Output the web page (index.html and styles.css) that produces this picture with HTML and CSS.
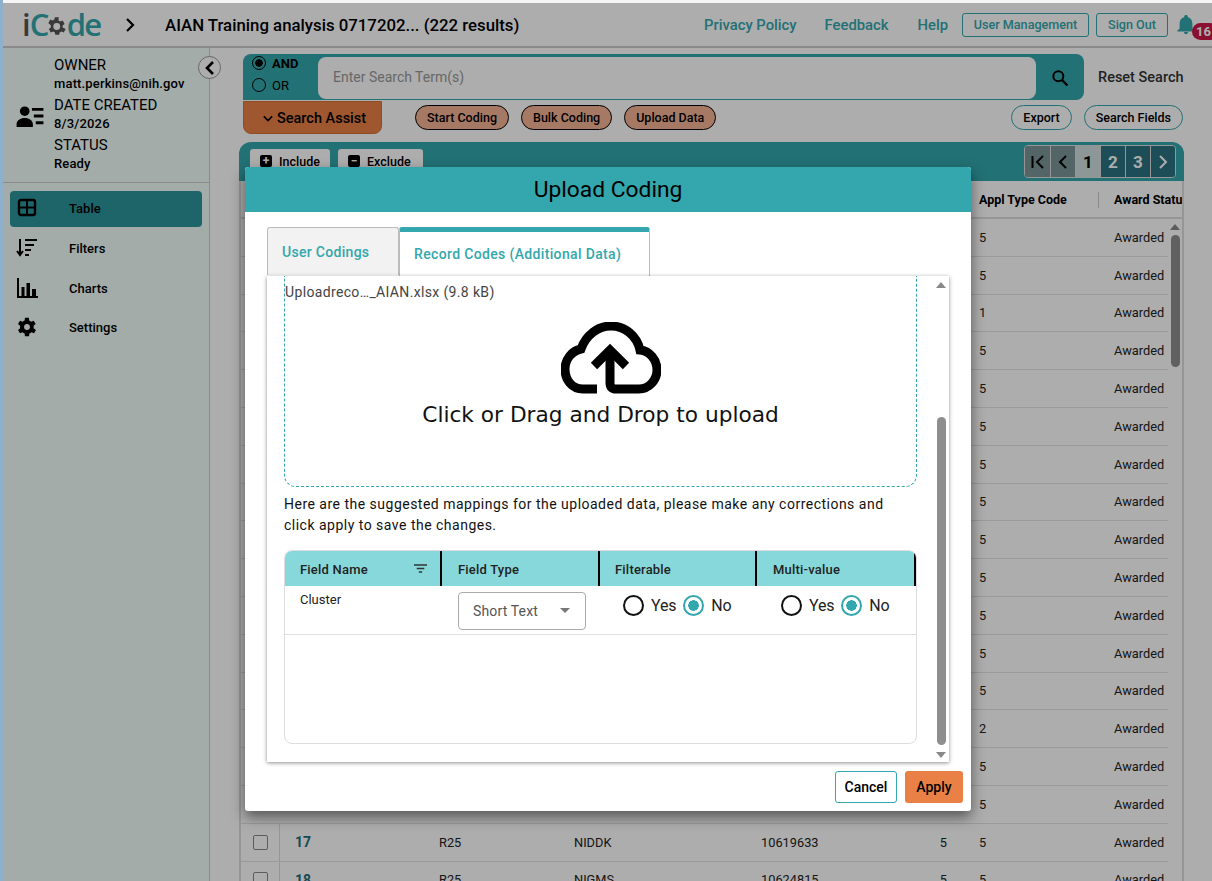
FILE: index.html
```html
<!DOCTYPE html>
<html lang="en">
<head>
    <meta charset="UTF-8">
    <title>iCode - Upload Coding</title>
    <link rel="stylesheet" href="styles.css">
</head>
<body>
    <div class="app">
        <header class="topbar">
            <div class="logo"><span class="logo-i">i</span>C<svg class="logo-gear" viewBox="0 0 24 24"><path d="M19.4 13c.1-.3.1-.7.1-1s0-.7-.1-1l2.100-1.600-2-3.500-2.500 1c-.5-.4-1.100-.7-1.700-1L15.500 2.500h-4l-.4 2.400c-.6.3-1.200.6-1.700 1l-2.500-1-2 3.500L7.500 11c-.1.300-.1.700-.1 1s0 .7.100 1l-2.100 1.600 2 3.500 2.500-1c.5.400 1.100.7 1.700 1l.4 2.400h4l.4-2.400c.6-.3 1.200-.6 1.700-1l2.500 1 2-3.500zM13.500 15.500a3.500 3.500 0 1 1 0-7 3.500 3.500 0 0 1 0 7z" transform="translate(-1.500 0)"/></svg>de</div>
            <svg class="crumb-arrow" viewBox="0 0 12 16"><path d="M3 2l6 6-6 6" fill="none" stroke="#000" stroke-width="2.200"/></svg>
            <div class="project-title">AIAN Training analysis 0717202... (222 results)</div>
            <nav class="toplinks">
                <a class="toplink">Privacy Policy</a>
                <a class="toplink link-feedback">Feedback</a>
                <a class="toplink link-help">Help</a>
                <button class="outline-btn btn-users">User Management</button>
                <button class="outline-btn btn-signout">Sign Out</button>
                <div class="bell">
                    <svg viewBox="0 0 24 24"><path d="M12 22c1.300 0 2.300-1 2.300-2.300H9.700C9.700 21 10.700 22 12 22zm7-6v-5.500c0-3.400-1.800-6.200-5-7V2.800C14 1.700 13.100 1 12 1s-2 .7-2 1.800v.7c-3.200.8-5 3.600-5 7V16l-2.500 2v1h19v-1z"/></svg>
                    <span class="badge">16</span>
                </div>
            </nav>
        </header>

        <div class="layout">
            <aside class="sidebar">
                <div class="project-info">
                    <svg class="info-icon" viewBox="0 0 28 24"><circle cx="8.500" cy="6.500" r="5"/><path d="M0 23v-3c0-4 4-6.500 8.500-6.500S17 16 17 20v3zM16 3h12v3H16zM18 10h10v3H18zM20 17h8v3h-8z"/></svg>
                    <dl class="info-list">
                        <dt>OWNER</dt>
                        <dd>matt.perkins@nih.gov</dd>
                        <dt>DATE CREATED</dt>
                        <dd>8/3/2026</dd>
                        <dt>STATUS</dt>
                        <dd>Ready</dd>
                    </dl>
                </div>
                <button class="collapse-btn"><svg viewBox="0 0 12 16"><path d="M9 2L3 8l6 6" fill="none" stroke="#000" stroke-width="2.600"/></svg></button>
                <ul class="side-nav">
                    <li class="side-item active">
                        <svg viewBox="0 0 22 20"><rect x="3" y="2" width="16" height="15" rx="2" fill="none" stroke="#000" stroke-width="2.400"/><path d="M3 9.500h16M11 2v15" stroke="#000" stroke-width="2"/></svg>
                        <span>Table</span>
                    </li>
                    <li class="side-item">
                        <svg viewBox="0 0 22 20"><path d="M4 1v15M1 13l3 4 3-4" fill="none" stroke="#000" stroke-width="2"/><path d="M9 2h12M9 7h9M9 12h6M9 17h4" stroke="#000" stroke-width="2.200"/></svg>
                        <span>Filters</span>
                    </li>
                    <li class="side-item">
                        <svg viewBox="0 0 22 20"><path d="M2 0v19h20" fill="none" stroke="#000" stroke-width="2"/><path d="M5.500 9h3v9h-3zM10.500 5h3.500v13h-3.500zM16 11h4v7h-4z"/></svg>
                        <span>Charts</span>
                    </li>
                    <li class="side-item">
                        <svg viewBox="0 0 24 24"><path d="M19.900 13.500c.1-.5.1-1 .1-1.500s0-1-.1-1.500l2.500-2-2.400-4.100-3 1.200c-.8-.6-1.600-1.100-2.500-1.400L14.400 1H9.600l-.5 3.200c-.9.300-1.700.8-2.500 1.400l-3-1.200-2.400 4.100 2.500 2c-.1.500-.1 1-.1 1.500s0 1 .1 1.500l-2.500 2 2.400 4.100 3-1.200c.8.600 1.600 1.100 2.500 1.400l.5 3.200h4.800l.5-3.200c.9-.3 1.700-.8 2.500-1.400l3 1.200 2.400-4.100zM12 15.500a3.500 3.500 0 1 1 0-7 3.500 3.500 0 0 1 0 7z"/></svg>
                        <span>Settings</span>
                    </li>
                </ul>
            </aside>

            <main class="content">
                <div class="search-row">
                    <div class="search-bar">
                        <div class="bool-choice">
                            <label class="bool-opt strong"><span class="bool-radio on"></span>AND</label>
                            <label class="bool-opt"><span class="bool-radio"></span>OR</label>
                        </div>
                        <div class="search-input">Enter Search Term(s)</div>
                        <div class="search-go">
                            <svg viewBox="0 0 24 24"><circle cx="10" cy="10" r="6" fill="none" stroke="#000" stroke-width="2.400"/><path d="M14.500 14.500L21 21" stroke="#000" stroke-width="2.800"/></svg>
                        </div>
                    </div>
                    <a class="reset-search">Reset Search</a>
                </div>

                <div class="action-row">
                    <button class="assist-btn"><svg viewBox="0 0 12 8"><path d="M1 1.500l5 5 5-5" fill="none" stroke="#000" stroke-width="2"/></svg>Search Assist</button>
                    <div class="pill-group">
                        <button class="pill">Start Coding</button>
                        <button class="pill">Bulk Coding</button>
                        <button class="pill">Upload Data</button>
                    </div>
                    <div class="pill-group right">
                        <button class="pill ghost">Export</button>
                        <button class="pill ghost">Search Fields</button>
                    </div>
                </div>

                <section class="table-card">
                    <div class="table-toolbar">
                        <button class="tool-btn"><span class="tool-icon">+</span>Include</button>
                        <button class="tool-btn"><span class="tool-icon">−</span>Exclude</button>
                        <div class="pager">
                            <span class="page-cell disabled"><svg viewBox="0 0 16 16"><path d="M2.500 2v12" stroke="#000" stroke-width="2"/><path d="M13 2L7 8l6 6" fill="none" stroke="#000" stroke-width="2"/></svg></span>
                            <span class="page-cell disabled"><svg viewBox="0 0 16 16"><path d="M11 2L5 8l6 6" fill="none" stroke="#000" stroke-width="2"/></svg></span>
                            <span class="page-cell current">1</span>
                            <span class="page-cell">2</span>
                            <span class="page-cell">3</span>
                            <span class="page-cell"><svg viewBox="0 0 16 16"><path d="M5 2l6 6-6 6" fill="none" stroke="#fff" stroke-width="2"/></svg></span>
                        </div>
                    </div>
                    <div class="table-head grid-row">
                        <span class="head-cell col-type">Appl Type Code</span>
                        <span class="head-cell col-status last">Award Status</span>
                    </div>
                    <div class="table-body">
                        <div class="table-rows">
                            <div class="grid-row row"><span class="col-type">5</span><span class="col-status">Awarded</span></div>
                            <div class="grid-row row"><span class="col-type">5</span><span class="col-status">Awarded</span></div>
                            <div class="grid-row row"><span class="col-type">1</span><span class="col-status">Awarded</span></div>
                            <div class="grid-row row"><span class="col-type">5</span><span class="col-status">Awarded</span></div>
                            <div class="grid-row row"><span class="col-type">5</span><span class="col-status">Awarded</span></div>
                            <div class="grid-row row"><span class="col-type">5</span><span class="col-status">Awarded</span></div>
                            <div class="grid-row row"><span class="col-type">5</span><span class="col-status">Awarded</span></div>
                            <div class="grid-row row"><span class="col-type">5</span><span class="col-status">Awarded</span></div>
                            <div class="grid-row row"><span class="col-type">5</span><span class="col-status">Awarded</span></div>
                            <div class="grid-row row"><span class="col-type">5</span><span class="col-status">Awarded</span></div>
                            <div class="grid-row row"><span class="col-type">5</span><span class="col-status">Awarded</span></div>
                            <div class="grid-row row"><span class="col-type">5</span><span class="col-status">Awarded</span></div>
                            <div class="grid-row row"><span class="col-type">5</span><span class="col-status">Awarded</span></div>
                            <div class="grid-row row"><span class="col-type">2</span><span class="col-status">Awarded</span></div>
                            <div class="grid-row row"><span class="col-type">5</span><span class="col-status">Awarded</span></div>
                            <div class="grid-row row"><span class="col-type">5</span><span class="col-status">Awarded</span></div>
                            <div class="grid-row row">
                                <span class="check-cell"><i class="checkbox"></i></span>
                                <span class="row-num">17</span><span>R25</span><span>NIDDK</span><span>10619633</span>
                                <span class="num-cell">5</span><span class="col-type">5</span><span class="col-status">Awarded</span>
                            </div>
                            <div class="grid-row row">
                                <span class="check-cell"><i class="checkbox"></i></span>
                                <span class="row-num">18</span><span>R25</span><span>NIGMS</span><span>10624815</span>
                                <span class="num-cell">5</span><span class="col-type">5</span><span class="col-status">Awarded</span>
                            </div>
                        </div>
                        <div class="table-scroll">
                            <i class="arrow-up"></i>
                            <i class="table-thumb"></i>
                        </div>
                    </div>
                </section>
            </main>
        </div>

        <div class="overlay"></div>

        <div class="modal">
            <h2 class="modal-title">Upload Coding</h2>
            <div class="modal-body">
                <div class="tabs">
                    <div class="tab">User Codings</div>
                    <div class="tab selected">Record Codes (Additional Data)</div>
                </div>
                <div class="tab-panel">
                    <div class="panel-content">
                        <div class="dropzone">
                            <div class="file-name">Uploadreco…_AIAN.xlsx (9.8 kB)</div>
                            <svg class="cloud" viewBox="0 0 100 73"><path d="M36 67H22C11 67 4 58 4 47 4 37 11 29 20 27 25 13 37 4 50 4c14 0 26 10 29 24 10 1 17 10 17 20 0 10-8 19-18 19H55c-4 0-6-2-6-6V30" fill="none" stroke="#000" stroke-width="9"/><path d="M33 44l16-16 16 16" fill="none" stroke="#000" stroke-width="9"/></svg>
                            <div class="drop-label">Click or Drag and Drop to upload</div>
                        </div>
                        <p class="mapping-note">Here are the suggested mappings for the uploaded data, please make any corrections and click apply to save the changes.</p>
                        <div class="mapping-table">
                            <div class="map-head map-grid">
                                <div class="map-th">Field Name<svg class="filter-icon" viewBox="0 0 12 8"><path d="M0 .8h12M2.500 4h7M4.500 7.200h3" stroke="#333" stroke-width="1.300"/></svg></div>
                                <div class="map-th">Field Type</div>
                                <div class="map-th">Filterable</div>
                                <div class="map-th">Multi-value</div>
                            </div>
                            <div class="map-row map-grid">
                                <div class="map-name">Cluster</div>
                                <div class="map-type">
                                    <div class="select-box">Short Text<i class="caret"></i></div>
                                </div>
                                <div class="radio-cell">
                                    <span class="radio"></span><span class="radio-text">Yes</span>
                                    <span class="radio on"></span><span class="radio-text">No</span>
                                </div>
                                <div class="radio-cell">
                                    <span class="radio"></span><span class="radio-text">Yes</span>
                                    <span class="radio on"></span><span class="radio-text">No</span>
                                </div>
                            </div>
                        </div>
                    </div>
                    <div class="panel-scroll">
                        <i class="arrow-up"></i>
                        <i class="panel-thumb"></i>
                        <i class="arrow-down"></i>
                    </div>
                </div>
            </div>
            <div class="modal-footer">
                <button class="btn-cancel">Cancel</button>
                <button class="btn-apply">Apply</button>
            </div>
        </div>
    </div>
</body>
</html>
```

FILE: styles.css
```css
* {
box-sizing: border-box;
}

html, body {
height: 100%;
}

body {
margin: 0;
padding: 3px 0 0 3px;
overflow: hidden;
background-color: #f4f4f4;
font-family: Roboto, "Liberation Sans", sans-serif;
color: #000;
box-shadow: inset 3px 0 0 #8fb0cc;
}

button {
font-family: inherit;
cursor: pointer;
}

.app {
position: relative;
width: 1209px;
height: 878px;
overflow: hidden;
display: flex;
flex-direction: column;
background-color: #fff;
}

/* top bar */
.topbar {
flex: none;
height: 45px;
display: flex;
align-items: center;
padding-left: 19px;
background-color: #fff;
border-bottom: 2px solid #ccc;
}

.logo {
width: 78px;
display: flex;
align-items: center;
font-family: "Open Sans", sans-serif;
font-size: 31px;
font-weight: 600;
line-height: 1;
letter-spacing: -2px;
color: #33a7ad;
}

.logo-i {
color: #555;
margin-right: 1px;
}

.logo-gear {
width: 25px;
height: 25px;
margin: 3px -2px 0 -2px;
fill: #555;
}

.crumb-arrow {
width: 12px;
height: 16px;
margin-left: 24px;
}

.project-title {
margin-left: 29px;
font-size: 16.800px;
font-weight: 500;
white-space: nowrap;
}

.toplinks {
margin-left: auto;
margin-right: -2px;
display: flex;
align-items: center;
width: 510px;
flex: none;
}

.toplink {
font-size: 14.800px;
font-weight: 500;
color: #33a7ad;
}

.link-feedback {
margin-left: 28px;
}

.link-help {
margin-left: 29px;
}

.outline-btn {
height: 24px;
padding: 0;
background: none;
border: 1px solid #33a7ad;
border-radius: 3px;
color: #33a7ad;
font-size: 12.600px;
font-weight: 500;
}

.btn-users {
width: 127px;
margin-left: 14px;
}

.btn-signout {
width: 72px;
margin-left: 7px;
}

.bell {
position: relative;
margin-left: 9px;
width: 20px;
height: 22px;
}

.bell svg {
display: block;
width: 22px;
height: 22px;
margin-left: -2px;
fill: #33a7ad;
}

.badge {
position: absolute;
left: 15px;
top: 9px;
width: 26px;
height: 17px;
padding-left: 4px;
border-radius: 9px;
background-color: #cc1747;
color: #fff;
font-size: 13px;
font-weight: 700;
line-height: 17px;
}

.layout {
flex: 1;
min-height: 0;
display: flex;
}

/* sidebar */
.sidebar {
position: relative;
flex: none;
width: 207px;
background-color: #f0fefa;
border-right: 1px solid #ccc;
}

.project-info {
height: 135px;
display: flex;
align-items: center;
padding-left: 13px;
border-bottom: 1px solid #ccc;
}

.info-icon {
width: 28px;
height: 23px;
margin-top: 2px;
flex: none;
}

.info-list {
margin: 0 0 0 10px;
padding-top: 2px;
}

.info-list dt {
font-size: 15px;
line-height: 19px;
}

.info-list dd {
margin: 0 0 3px;
font-size: 13px;
font-weight: 500;
line-height: 18px;
letter-spacing: .15px;
}

.collapse-btn {
position: absolute;
right: -12px;
top: 8px;
width: 23px;
height: 23px;
padding: 4px;
display: flex;
align-items: center;
justify-content: center;
border: 1px solid #999;
border-radius: 50%;
background-color: #fff;
}

.collapse-btn svg {
width: 12px;
height: 16px;
}

.side-nav {
list-style: none;
margin: 8px 0 0;
padding: 0 7px;
}

.side-item {
height: 36px;
margin-bottom: 4px;
padding: 0 0 2px 6px;
display: flex;
align-items: center;
gap: 31px;
border-radius: 4px;
font-size: 13px;
font-weight: 500;
}

.side-item:last-child {
margin-top: -1px;
}

.side-item svg {
width: 22px;
height: 20px;
flex: none;
}

.side-item.active {
background-color: #2d959c;
}

/* search */
.content {
flex: 1;
min-width: 0;
padding: 6px 0 0 33px;
display: flex;
flex-direction: column;
}

.search-row {
display: flex;
align-items: center;
}

.search-bar {
width: 841px;
height: 46px;
display: flex;
padding-top: 3px;
padding-bottom: 1px;
background-color: #33a7ad;
border-radius: 8px 8px 8px 0;
}

.bool-choice {
width: 75px;
padding-left: 9px;
margin-top: -5px;
}

.bool-opt {
height: 22px;
display: flex;
align-items: center;
gap: 6px;
font-size: 13px;
}

.bool-opt.strong {
font-weight: 700;
}

.bool-radio {
width: 14px;
height: 14px;
border: 1.500px solid #000;
border-radius: 50%;
}

.bool-radio.on {
background: radial-gradient(circle, #000 0 3.500px, transparent 4px);
}

.search-input {
width: 718px;
display: flex;
align-items: center;
padding: 0 0 2px 15px;
background-color: #fff;
border-radius: 8px;
color: #999;
font-size: 14px;
}

.search-go {
flex: 1;
display: flex;
align-items: center;
justify-content: center;
}

.search-go svg {
width: 20px;
height: 20px;
}

.reset-search {
margin-left: 14px;
font-size: 14.500px;
font-weight: 500;
color: #333;
white-space: nowrap;
}

.action-row {
height: 34px;
display: flex;
align-items: flex-start;
padding-right: 29px;
}

.assist-btn {
width: 139px;
height: 33px;
margin-top: 1px;
display: flex;
align-items: center;
gap: 4px;
padding: 2px 0 0 19px;
background-color: #e98045;
border: 1px solid #d87035;
border-radius: 0 0 8px 8px;
font-size: 14.500px;
font-weight: 500;
}

.assist-btn svg {
width: 10px;
height: 7px;
}

.pill-group {
margin: 5px 0 0 33px;
display: flex;
gap: 12px;
}

.pill-group.right {
margin-left: auto;
}

.pill {
height: 25px;
padding: 0 11px;
background-color: #f5b394;
border: 1px solid #000;
border-radius: 13px;
font-size: 12.500px;
font-weight: 500;
}

.pill.ghost {
background: none;
border-color: #33a7ad;
}

/* data table behind the dialog */
.table-card {
width: 945px;
flex: 1;
min-height: 0;
margin: 8px 0 0 -4px;
display: flex;
flex-direction: column;
overflow: hidden;
border-radius: 12px 12px 0 0;
}

.table-toolbar {
flex: none;
height: 39px;
display: flex;
gap: 8px;
padding: 7px 8px 0 11px;
background-color: #33a7ad;
}

.tool-btn {
width: 80px;
height: 26px;
display: flex;
align-items: center;
gap: 7px;
padding: 0 0 2px 10px;
background-color: #fff;
border: none;
border-radius: 3px 3px 0 0;
font-size: 12.500px;
font-weight: 500;
}

.tool-btn + .tool-btn {
width: 85px;
}

.tool-icon {
width: 12px;
height: 12px;
border-radius: 2px;
background-color: #000;
color: #fff;
font-size: 12px;
font-weight: 700;
line-height: 12px;
text-align: center;
}

.pager {
margin: -4px 0 0 auto;
height: 33px;
display: flex;
overflow: hidden;
border: 1px solid #ddd;
border-radius: 4px;
}

.page-cell {
width: 25px;
display: flex;
align-items: center;
justify-content: center;
background-color: #2b7380;
border-left: 1px solid #ddd;
color: #fff;
font-size: 17px;
font-weight: 700;
}

.page-cell:first-child {
border-left: none;
}

.page-cell svg {
width: 16px;
height: 16px;
}

.page-cell.disabled {
background-color: #7d9699;
}

.page-cell.current {
background-color: #d1dfe0;
color: #000;
}

.grid-row {
display: grid;
grid-template-columns: 39px 144px 135px 187px 110px 108px 135px 1fr;
align-items: center;
font-size: 12.800px;
color: #222;
}

.col-type {
grid-column: 7;
}

.col-status {
grid-column: 8;
}

.table-head {
flex: none;
height: 38px;
padding-top: 2px;
border-left: 2px solid #ddd;
border-right: 2px solid #ddd;
border-bottom: 2px solid #ddd;
background-color: #fff;
}

.head-cell {
padding-left: 15px;
font-size: 12.500px;
font-weight: 700;
color: #000;
white-space: nowrap;
border-right: 1px solid #ccc;
line-height: 16px;
}

.head-cell.last {
border-right: none;
overflow: hidden;
}

.table-body {
flex: 1;
min-height: 0;
display: flex;
border-left: 2px solid #ddd;
border-right: 2px solid #ddd;
}

.table-rows {
width: 927px;
flex: none;
}

.row {
height: 37.800px;
border-bottom: 1px solid #e4e4e4;
background-color: #fff;
}

.row span {
padding-left: 15px;
}

.row .check-cell {
padding: 0;
height: 100%;
display: flex;
align-items: center;
justify-content: center;
border-right: 1px solid #ddd;
}

.checkbox {
width: 15px;
height: 15px;
border: 1px solid #888;
border-radius: 2px;
}

.row .row-num {
font-weight: 700;
color: #246e78;
font-size: 14px;
}

.row .num-cell {
padding: 0 17px 0 0;
text-align: right;
}

.table-scroll {
flex: 1;
display: flex;
flex-direction: column;
align-items: center;
padding-top: 5px;
}

.arrow-up {
width: 0;
height: 0;
border-left: 5px solid transparent;
border-right: 5px solid transparent;
border-bottom: 6px solid #888;
}

.arrow-down {
width: 0;
height: 0;
border-left: 5px solid transparent;
border-right: 5px solid transparent;
border-top: 6px solid #888;
}

.table-thumb {
width: 9px;
height: 132px;
margin-top: 5px;
background-color: #8e8e8e;
border-radius: 5px;
}

/* dim layer */
.overlay {
position: absolute;
top: 0;
right: 0;
bottom: 0;
left: 0;
background-color: rgba(0, 0, 0, 0.32);
}

/* upload dialog */
.modal {
position: absolute;
left: 242px;
top: 164px;
width: 726px;
height: 644px;
display: flex;
flex-direction: column;
background-color: #fff;
border-radius: 3px;
box-shadow: 0 6px 14px rgba(0, 0, 0, 0.5);
}

.modal-title {
flex: none;
margin: 0;
height: 45px;
background-color: #33a7ad;
border-radius: 3px 3px 0 0;
font-size: 22.800px;
font-weight: 400;
line-height: 45px;
text-align: center;
}

.modal-body {
flex: 1;
min-height: 0;
padding: 15px 22px 0;
display: flex;
flex-direction: column;
}

.tabs {
flex: none;
display: flex;
height: 49px;
}

.tab {
width: 132px;
height: 48px;
padding: 16px 0 0 14px;
background-color: #f2f2f2;
border: 1px solid #bbb;
border-bottom: none;
border-radius: 3px 3px 0 0;
color: #33a7ad;
font-size: 14px;
font-weight: 500;
letter-spacing: .3px;
}

.tab.selected {
width: 251px;
height: 49px;
padding-top: 14px;
background-color: #fff;
border-top: 5px solid #33a7ad;
letter-spacing: .35px;
}

.tab-panel {
flex: none;
width: 682px;
height: 486px;
display: flex;
box-shadow: 0 1px 4px rgba(0, 0, 0, 0.45);
background-color: #fff;
}

.panel-content {
width: 666px;
padding-left: 17px;
}

.dropzone {
width: 633px;
height: 211px;
display: flex;
flex-direction: column;
align-items: center;
border: 1px dashed #33a7ad;
border-top: none;
border-radius: 0 0 12px 12px;
}

.file-name {
align-self: flex-start;
margin-top: 8px;
color: #444;
font-size: 14px;
line-height: 16px;
letter-spacing: .35px;
}

.cloud {
width: 100px;
height: 73px;
margin-top: 22px;
margin-left: 21px;
}

.drop-label {
margin-top: 6px;
font-family: "DejaVu Sans", sans-serif;
font-size: 21.700px;
line-height: 28px;
color: #111;
white-space: nowrap;
}

.mapping-note {
width: 632px;
margin: 7px 0 14px;
font-size: 14px;
line-height: 21px;
letter-spacing: .49px;
color: #111;
}

.mapping-table {
width: 633px;
height: 194px;
border: 1px solid #ddd;
border-radius: 8px;
overflow: hidden;
}

.map-grid {
display: grid;
grid-template-columns: 157px 158px 157px 159px;
}

.map-head {
height: 35px;
background-color: #87d8da;
}

.map-th {
display: flex;
align-items: center;
position: relative;
padding-left: 16px;
padding-top: 2px;
border-right: 2px solid #000;
font-size: 13px;
font-weight: 500;
letter-spacing: .2px;
color: #222;
}

.map-th:first-child, .map-th:nth-child(3) {
padding-left: 15px;
}

.filter-icon {
position: absolute;
right: 13px;
top: 13px;
width: 13px;
height: 9px;
}

.map-row {
height: 49px;
border-bottom: 1px solid #ddd;
}

.map-name {
padding: 6px 0 0 15px;
font-size: 13px;
line-height: 15px;
color: #222;
}

.map-type {
padding: 6px 0 0 16px;
}

.select-box {
position: relative;
width: 128px;
height: 38px;
padding-left: 14px;
border: 1px solid #aaa;
border-radius: 4px;
color: #555;
font-size: 14px;
line-height: 36px;
letter-spacing: .15px;
}

.caret {
position: absolute;
right: 15px;
top: 15px;
width: 0;
height: 0;
border-left: 5px solid transparent;
border-right: 5px solid transparent;
border-top: 5px solid #777;
}

.radio-cell {
display: flex;
align-items: center;
padding: 0 0 10px 23px;
}

.radio-cell:last-child {
padding-left: 24px;
}

.radio {
width: 21px;
height: 21px;
flex: none;
border: 2px solid #111;
border-radius: 50%;
}

.radio.on {
border-color: #33a7ad;
background: radial-gradient(circle, #33a7ad 0 5px, transparent 5.500px);
}

.radio-text {
margin: 1px 7px 0;
font-size: 16px;
letter-spacing: -.2px;
color: #222;
}

.panel-scroll {
flex: 1;
display: flex;
flex-direction: column;
align-items: center;
padding: 6px 0 4px;
}

.panel-thumb {
width: 9px;
height: 328px;
margin-top: auto;
margin-bottom: 7px;
background-color: #8e8e8e;
border-radius: 5px;
}

.modal-footer {
flex: none;
height: 49px;
padding: 9px 8px 0 0;
display: flex;
justify-content: flex-end;
gap: 8px;
}

.btn-cancel {
width: 62px;
height: 32px;
padding: 0;
background-color: #fff;
border: 1px solid #33a7ad;
border-radius: 3px;
font-size: 14px;
font-weight: 500;
}

.btn-apply {
width: 58px;
height: 32px;
padding: 0;
background-color: #e98045;
border: none;
border-radius: 3px;
font-size: 14px;
font-weight: 500;
}
```
